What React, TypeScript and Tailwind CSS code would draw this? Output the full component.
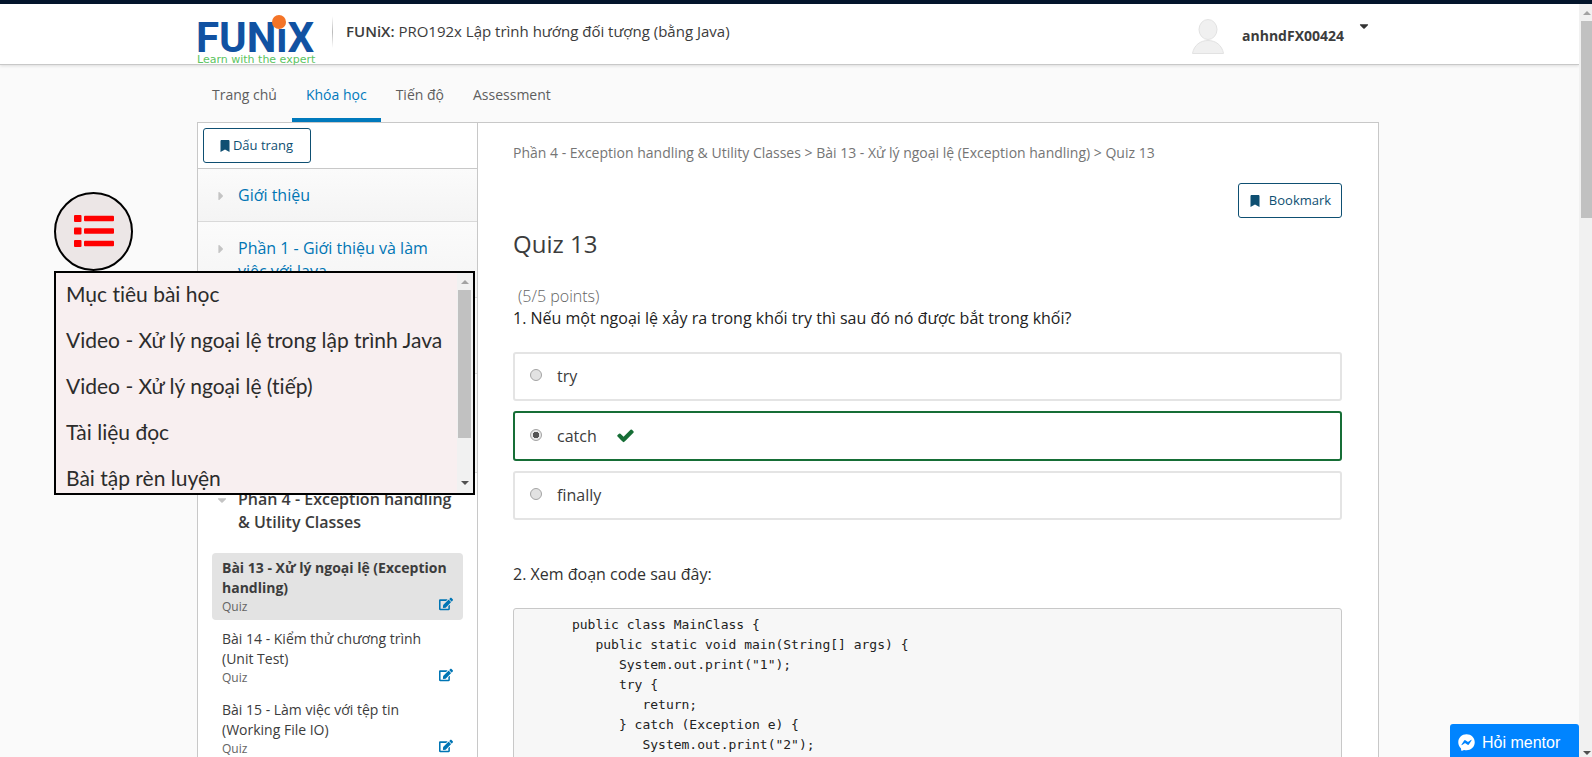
import { useState } from "react";
import { FaBookmark, FaCaretDown, FaCaretRight, FaEdit, FaFacebookMessenger } from "react-icons/fa";

const tabs = ["Trang chủ", "Khóa học", "Tiến độ", "Assessment"];

const chapters = [
  "Giới thiệu",
  "Phần 1 - Giới thiệu và làm việc với Java",
  "Phần 2 - Lập trình hướng đối tượng cơ bản",
  "Phần 3 - Lập trình hướng đối tượng nâng cao và các lớp trừu tượng",
];

const lessons = [
  "Bài 13 - Xử lý ngoại lệ (Exception handling)",
  "Bài 14 - Kiểm thử chương trình (Unit Test)",
  "Bài 15 - Làm việc với tệp tin (Working File IO)",
];

const outline = [
  "Mục tiêu bài học",
  "Video - Xử lý ngoại lệ trong lập trình Java",
  "Video - Xử lý ngoại lệ (tiếp)",
  "Tài liệu đọc",
  "Bài tập rèn luyện",
];

const options = ["try", "catch", "finally"];

const code = `      public class MainClass {
         public static void main(String[] args) {
            System.out.print("1");
            try {
               return;
            } catch (Exception e) {
               System.out.print("2");
            } finally {
               System.out.print("3");
            }
         }
      }`;

function Logo() {
  return (
    <svg width="120" height="56" viewBox="0 0 120 56" role="img" aria-label="FUNiX">
      <text x="-1" y="40" fontFamily="Roboto, sans-serif" fontWeight="700" fontSize="42" fill="#1152a2">
        FUNiX
      </text>
      <circle cx="82" cy="10" r="7" fill="#f47427" />
      <text x="0" y="51" fontFamily="'DejaVu Sans', sans-serif" fontSize="11" fill="#5cc45f">
        Learn with the expert
      </text>
    </svg>
  );
}

function CheckIcon({ className }: { className: string }) {
  return (
    <svg width="19" height="19" viewBox="0 0 1792 1792" fill="currentColor" className={className}>
      <path d="M1671 566q0 40-28 68l-724 724-136 136q-28 28-68 28t-68-28l-136-136-362-362q-28-28-28-68t28-68l136-136q28-28 68-28t68 28l294 295 656-657q28-28 68-28t68 28l136 136q28 28 28 68z" />
    </svg>
  );
}

function Header() {
  return (
    <header className="z-10 border-b border-[#c8c8c8] bg-white pr-[3px] shadow-[0_1px_3px_rgba(0,0,0,0.12)]">
      <div className="mx-auto flex h-[60px] max-w-[1182px] items-start">
        <a href="#" className="mt-2">
          <Logo />
        </a>
        <div className="mt-3 ml-[15px] h-[32px] w-px bg-gradient-to-b from-white via-[#bbb] to-white" />
        <h1 className="mt-4 ml-[13px] text-[15px] leading-[22px] text-[#3c3c3c]">
          <span className="font-semibold">FUNiX:</span> PRO192x Lập trình hướng đối tượng (bằng Java)
        </h1>
        <div className="mr-2 ml-auto flex items-start">
          <svg className="mt-[15px]" width="32" height="35" viewBox="0 0 32 35" fill="#f0f0f0" stroke="#e2e2e2">
            <path d="M.5 34.5C2 26 8.500 21.500 16 21.500S30 26 31.500 34.500Z" />
            <ellipse cx="16" cy="10.500" rx="9" ry="10" />
          </svg>
          <span className="mt-5 ml-[18px] text-[14px] leading-[24px] font-bold text-[#3c3c3c]">anhndFX00424</span>
          <button aria-label="Menu" className="mt-[15px] ml-[13px] text-[#333]">
            <FaCaretDown size={14} />
          </button>
        </div>
      </div>
    </header>
  );
}

function Sidebar() {
  return (
    <aside className="w-[280px] shrink-0 border-r border-[#c8c8c8]">
      <div className="border-b border-[#c8c8c8] p-[5px]">
        <button className="flex h-[35px] w-[108px] items-center justify-center gap-[2px] rounded-[3px] border border-[#0e4f72] pr-[2px] text-[13px] text-[#0e4f72]">
          <FaBookmark size={12} />
          Dấu trang
        </button>
      </div>
      {chapters.map((c) => (
        <a
          key={c}
          href="#"
          className="flex border-b border-[#d9d9d9] bg-gradient-to-b from-[#fbfbfb] to-[#f4f4f4] pt-[15px] pr-6 pb-[14px] pl-4 text-[16px] leading-[23px] text-[#0075b4]"
        >
          <FaCaretRight size={14} className="mt-[5px] mr-[10px] shrink-0 text-[#c4c4c4]" />
          <span>{c}</span>
        </a>
      ))}
      <div className="px-[14px] pt-[15px]">
        <a href="#" className="flex pl-[3px] text-[16px] leading-[23px] font-semibold text-[#3c3c3c]">
          <FaCaretDown size={14} className="mt-[5px] mr-[9px] shrink-0 text-[#c4c4c4]" />
          <span>Phần 4 - Exception handling &amp; Utility Classes</span>
        </a>
        <ul className="mt-[19px] flex flex-col gap-1">
          {lessons.map((l, i) => (
            <li key={l}>
              <a
                href="#"
                className={
                  i === 0
                    ? "block rounded-[4px] bg-[#e3e3e3] px-[10px] py-[5px] font-bold text-[#3c3c3c]"
                    : "block px-[10px] py-[5px] text-[#3c3c3c]"
                }
              >
                <span className="block text-[14px] leading-[20px]">{l}</span>
                <span className="flex h-[17px] items-center justify-between text-[12px] leading-[17px] font-normal text-[#646464]">
                  Quiz
                  <FaEdit size={14} className="mb-[5px] text-[#0075b4]" />
                </span>
              </a>
            </li>
          ))}
        </ul>
      </div>
    </aside>
  );
}

function Quiz() {
  const [answer, setAnswer] = useState("catch");
  return (
    <main className="min-w-0 flex-1 pt-5 pr-9 pl-[35px]">
      <p className="text-[14px] leading-[20px] text-[#757575]">
        Phần 4 - Exception handling &amp; Utility Classes &gt; Bài 13 - Xử lý ngoại lệ (Exception handling) &gt; Quiz 13
      </p>
      <div className="mt-5 flex justify-end">
        <button className="flex h-[35px] w-[104px] items-center justify-center gap-2 rounded-[3px] border border-[#0e4f72] text-[13px] text-[#0e4f72]">
          <FaBookmark size={12} />
          Bookmark
        </button>
      </div>
      <h2 className="mt-[9px] text-[24px] leading-[34px] text-[#3c3c3c]">Quiz 13</h2>
      <p className="mt-6 ml-[5px] text-[16px] leading-[22px] font-light text-[#646464]">(5/5 points)</p>
      <fieldset>
        <legend className="text-[16px] leading-[22px] text-[#222]">
          1. Nếu một ngoại lệ xảy ra trong khối try thì sau đó nó được bắt trong khối?
        </legend>
        <div className="mt-[23px] flex flex-col gap-[10px]">
          {options.map((o) => (
            <label
              key={o}
              className={
                o === "catch"
                  ? "flex h-[50px] items-center rounded-[3px] border-2 border-[#166e36] pb-px pl-[15px] text-[16px] text-[#3c3c3c]"
                  : "flex h-[49px] items-center rounded-[3px] border-2 border-[#e4e4e4] pb-[2px] pl-[15px] text-[16px] text-[#3c3c3c]"
              }
            >
              <input
                type="radio"
                name="answer"
                checked={answer === o}
                onChange={() => setAnswer(o)}
                className="mr-[15px] mb-[2px] size-3 appearance-none rounded-full border border-[#a4a4a4] bg-[#e2e2e2] checked:bg-[radial-gradient(circle,#555_0_3px,#e8e8e8_3.5px)]"
              />
              {o}
              {o === "catch" && <CheckIcon className="ml-[19px] text-[#166e36]" />}
            </label>
          ))}
        </div>
      </fieldset>
      <p className="mt-[43px] text-[16px] leading-[22px] text-[#313131]">2. Xem đoạn code sau đây:</p>
      <pre className="mt-[23px] overflow-hidden rounded-[3px] border border-[#c8c8c8] bg-[#f7f7f7] px-[11px] py-[6px] font-['DejaVu_Sans_Mono',monospace] text-[13px] leading-[20px] text-[#222]">
        {code}
      </pre>
    </main>
  );
}

function OutlineWidget() {
  return (
    <div className="absolute top-[188px] left-[54px] z-20 w-[421px]">
      <button
        aria-label="Mục lục"
        className="flex size-[79px] items-center justify-center rounded-full border-2 border-black bg-[#ece6e6]"
      >
        <svg width="40" height="32" viewBox="0 0 40 32" fill="#f00" className="mb-[2px]">
          <rect x="0" y="0" width="7.500" height="7" rx="1" />
          <rect x="10" y=".7" width="30" height="5.600" rx="1" />
          <rect x="0" y="12.500" width="7.500" height="7" rx="1" />
          <rect x="10" y="13.200" width="30" height="5.600" rx="1" />
          <rect x="0" y="25" width="7.500" height="7" rx="1" />
          <rect x="10" y="25.700" width="30" height="5.600" rx="1" />
        </svg>
      </button>
      <div className="flex h-[224px] overflow-hidden border-2 border-black bg-[#f8eff0]">
        <ul className="-mt-[2px] flex-1 pl-[10px] font-[Lato,sans-serif] text-[21px] leading-[46px] whitespace-nowrap text-[#2c2c2c] [font-variant-ligatures:none]">
          {outline.map((o) => (
            <li key={o}>
              <a href="#">{o}</a>
            </li>
          ))}
        </ul>
        <div className="flex w-4 flex-col items-center bg-[#f1f1f1] pr-px">
          <Arrow className="mt-[7px] mb-[6px] text-[#a3a3a3]" up />
          <div className="h-[148px] w-[13px] bg-[#c1c1c1]" />
          <Arrow className="mt-auto mb-2 text-[#505050]" />
        </div>
      </div>
    </div>
  );
}

function Arrow({ up, className }: { up?: boolean; className: string }) {
  return (
    <svg width="8" height="4" viewBox="0 0 8 4" fill="currentColor" className={className}>
      <path d={up ? "M0 4 4 0l4 4Z" : "M0 0h8L4 4Z"} />
    </svg>
  );
}

export default function App() {
  return (
    <div className="flex h-screen flex-col overflow-hidden bg-[#fafafa] font-['Open_Sans','Noto_Sans',sans-serif]">
      <div className="h-1 shrink-0 bg-[#03152b]" />
      <div className="flex min-h-0 flex-1">
        <div className="relative flex min-w-0 flex-1 flex-col overflow-hidden">
          <Header />
          <div className="pr-[3px]">
            <div className="mx-auto max-w-[1182px]">
              <nav className="flex h-[57px] gap-px pl-px text-[14px]">
                {tabs.map((t) => (
                  <a
                    key={t}
                    href="#"
                    className={
                      t === "Khóa học"
                        ? "flex items-center border-b-4 border-[#0079bc] px-[14px] pt-[6px] text-[#0079bc]"
                        : "flex items-center border-b-4 border-transparent px-[14px] pt-[6px] text-[#5e5e5e]"
                    }
                  >
                    {t}
                  </a>
                ))}
              </nav>
              <div className="flex border border-[#c8c8c8] bg-white">
                <Sidebar />
                <Quiz />
              </div>
            </div>
          </div>
          <OutlineWidget />
          <button className="absolute right-0 bottom-0 flex h-[33px] w-[129px] items-center gap-[7px] rounded-t-[3px] bg-[#0084ff] pt-1 pl-2 font-['Liberation_Sans',sans-serif] text-[16px] text-white">
            <FaFacebookMessenger size={17} />
            Hỏi mentor
          </button>
        </div>
        <div className="flex w-[13px] shrink-0 flex-col items-end bg-[#f1f1f1]">
          <Arrow className="mt-[7px] mb-[6px] mr-px text-[#a3a3a3]" up />
          <div className="h-[197px] w-[11px] bg-[#c1c1c1]" />
          <Arrow className="mt-auto mr-px mb-[2px] text-[#505050]" />
        </div>
      </div>
    </div>
  );
}
